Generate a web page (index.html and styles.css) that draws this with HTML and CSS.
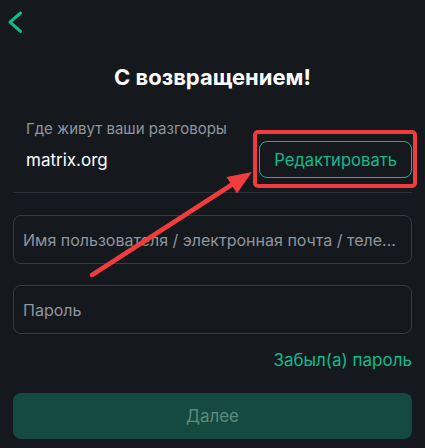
FILE: index.html
```html
<!doctype html>
<html>
<head>
  <meta charset="utf-8">
  <title>Вход</title>
  <link rel="stylesheet" href="styles.css">
</head>
<body>
  <div class="nav">
    <svg class="back" width="24" height="24" viewBox="0 0 24 24">
      <path d="M16.5 3 L6 12.2 L16.5 21.4" fill="none" stroke="#0dbd8b" stroke-width="3" stroke-linecap="round" stroke-linejoin="round"/>
    </svg>
  </div>
  <h1 class="title">С возвращением!</h1>
  <div class="server">
    <div class="server-label">Где живут ваши разговоры</div>
    <div class="server-row">
      <span class="server-name">matrix.org</span>
      <button class="edit">Редактировать</button>
    </div>
  </div>
  <div class="divider"></div>
  <div class="form">
    <div class="field">Имя пользователя / электронная почта / теле...</div>
    <div class="field">Пароль</div>
    <div class="forgot">Забыл(а) пароль</div>
    <button class="next">Далее</button>
  </div>

  <!-- annotation overlay -->
  <svg class="markup" width="425" height="448" viewBox="0 0 425 448">
    <rect x="255" y="132" width="160" height="54" rx="3" fill="none" stroke="#f03c3c" stroke-width="4"/>
    <line x1="92" y1="275" x2="236" y2="182" stroke="#f03c3c" stroke-width="4.5" stroke-linecap="round"/>
    <polygon points="252,172 237,193.5 231,184 226.5,177" fill="#f03c3c"/>
  </svg>
</body>
</html>
```

FILE: styles.css
```css
body {
  margin: 0;
  height: 448px;
  overflow: hidden;
  position: relative;
  background: #15191e;
  color: #ebeef2;
  font-family: 'Inter', 'Noto Sans', sans-serif;
  --green: #0dbd8b;
  --border: #363b42;
  --muted: #8e959d;
}

.nav {
  height: 44px;
  display: flex;
  align-items: center;
  padding-left: 4px;
}

.back {
  display: block;
}

.title {
  margin: 19px 0 0;
  font-size: 22px;
  line-height: 28px;
  font-weight: 700;
  text-align: center;
  color: #ffffff;
}

.server {
  margin: 28px 13px 0 26px;
}

.server-label {
  font-size: 15px;
  line-height: 20px;
  color: var(--muted);
}

.server-row {
  margin-top: 2px;
  height: 37px;
  display: flex;
  align-items: center;
  justify-content: space-between;
}

.server-name {
  font-size: 17px;
  line-height: 22px;
  color: #ffffff;
}

.edit {
  height: 37px;
  padding: 0 14px;
  background: transparent;
  border: 1px solid var(--green);
  border-radius: 8px;
  color: var(--green);
  font-family: inherit;
  font-size: 16.6px;
}

.divider {
  margin: 14px 13px 0;
  height: 1px;
  background: #2c3137;
}

.form {
  margin: 22px 13px 0;
  display: flex;
  flex-direction: column;
}

.field {
  height: 47px;
  display: flex;
  align-items: center;
  padding: 0 9px;
  border: 1px solid var(--border);
  border-radius: 8px;
  font-size: 16px;
  color: var(--muted);
  white-space: nowrap;
  overflow: hidden;
}

.field + .field {
  margin-top: 21px;
}

.forgot {
  margin-top: 16px;
  align-self: flex-end;
  font-size: 17px;
  line-height: 20px;
  color: var(--green);
}

.next {
  margin-top: 23px;
  height: 46px;
  border: none;
  border-radius: 8px;
  background: #144a3f;
  color: #5b8b7f;
  font-family: inherit;
  font-size: 17px;
}

.markup {
  position: absolute;
  left: 0;
  top: 0;
  pointer-events: none;
}
```
